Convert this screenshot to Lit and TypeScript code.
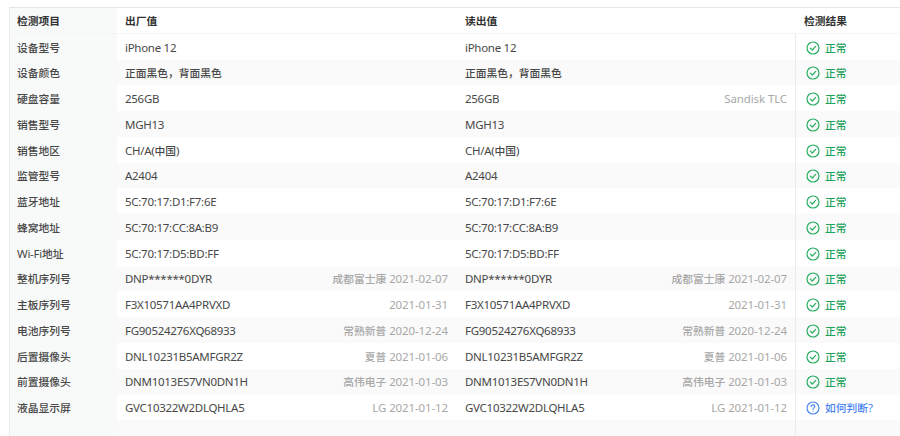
import { LitElement, html, css, svg } from "lit";
import { customElement } from "lit/decorators.js";

type Row = [string, string, string, string, string?];
const rows: Row[] = [
  ["设备型号", "iPhone 12", "", ""],
  ["设备颜色", "正面黑色，背面黑色", "", ""],
  ["硬盘容量", "256GB", "", "Sandisk TLC"],
  ["销售型号", "MGH13", "", ""],
  ["销售地区", "CH/A(中国)", "", ""],
  ["监管型号", "A2404", "", ""],
  ["蓝牙地址", "5C:70:17:D1:F7:6E", "", ""],
  ["蜂窝地址", "5C:70:17:CC:8A:B9", "", ""],
  ["Wi-Fi地址", "5C:70:17:D5:BD:FF", "", ""],
  ["整机序列号", "DNP******0DYR", "成都富士康 2021-02-07", "成都富士康 2021-02-07"],
  ["主板序列号", "F3X10571AA4PRVXD", "2021-01-31", "2021-01-31"],
  ["电池序列号", "FG90524276XQ68933", "常熟新普 2020-12-24", "常熟新普 2020-12-24"],
  ["后置摄像头", "DNL10231B5AMFGR2Z", "夏普 2021-01-06", "夏普 2021-01-06"],
  ["前置摄像头", "DNM1013ES7VN0DN1H", "高伟电子 2021-01-03", "高伟电子 2021-01-03"],
  ["液晶显示屏", "GVC10322W2DLQHLA5", "LG 2021-01-12", "LG 2021-01-12", "q"],
];

const okIcon = svg`<svg class="ic" viewBox="0 0 14 14" width="14" height="14" fill="none" stroke="#27ae60" stroke-width="1.2"><circle cx="7" cy="7" r="6"/><path d="M4.3 7.1 6.3 9l3.4-3.6" stroke-linecap="round" stroke-linejoin="round"/></svg>`;
const qIcon = svg`<svg class="ic" viewBox="0 0 14 14" width="14" height="14" fill="none" stroke="#4c84f3" stroke-width="1.2"><circle cx="7" cy="7" r="6"/><path d="M5.2 5.6c0-1 .8-1.7 1.8-1.7s1.8.7 1.8 1.6c0 1.3-1.8 1.4-1.8 2.7" stroke-linecap="round"/><path d="M7 9.7v.9"/></svg>`;

/* Latin and CJK runs have different optical sizes in the reference. */
const txt = (s: string) =>
  s
    .split(/([\u3000-\u9fff\uff00-\uffef]+)/)
    .map((p, i) => (i % 2 ? html`<span class="cjk">${p}</span>` : p));

@customElement("app-root")
export class AppRoot extends LitElement {
  static styles = css`
    :host {
      display: block;
      width: 900px;
      height: 436px;
      overflow: hidden;
      background: #fff;
      font-family: "Noto Sans", "Noto Sans CJK SC", sans-serif;
      font-size: 11.5px;
      letter-spacing: -0.28px;
      color: #484848;
    }
    .cjk {
      font-size: 10.75px;
      font-weight: 500;
      letter-spacing: 0;
    }
    .head .cjk {
      font-weight: 700;
    }
    .page {
      padding: 7px 0 0 9px;
    }
    .table {
      display: grid;
      grid-template-columns: 107px 340px 338px 105px;
      grid-auto-rows: 25.75px;
      border-top: 1px solid #e6e6e6;
      border-left: 1px solid #ececec;
    }
    .row {
      display: contents;
    }
    .c {
      display: flex;
      align-items: center;
      justify-content: space-between;
      padding: 1px 9px 0 8px;
      white-space: nowrap;
      background: #fff;
    }
    .row.alt .c {
      background: #fafafa;
    }
    .c.label {
      background: #f8f9f9;
      padding-left: 7px;
    }
    .row.alt .c.label {
      background: #f8f9f9;
    }
    .c.r {
      padding-right: 8px;
    }
    .c.res {
      gap: 5px;
      justify-content: flex-start;
      padding-left: 10px;
      border-left: 1px solid #ececec;
    }
    .head .c {
      font-weight: 700;
      color: #333;
      border-bottom: 1px solid #f5f5f5;
    }
    .head .c.res {
      padding-left: 9px;
      border-left: none;
    }
    .sub {
      color: #a8a8a8;
      letter-spacing: -0.12px;
    }
    .ok {
      color: #1fa35c;
    }
    .q {
      color: #4c84f3;
    }
    .ic {
      flex: none;
      margin-top: 1px;
    }
  `;

  render() {
    return html`<div class="page">
      <div class="table">
        <div class="row head">
          <div class="c label">${txt("检测项目")}</div>
          <div class="c">${txt("出厂值")}</div>
          <div class="c r">${txt("读出值")}</div>
          <div class="c res">${txt("检测结果")}</div>
        </div>
        ${rows.map(
          (r, i) => html`<div class="row ${i % 2 === 1 ? "alt" : ""}">
            <div class="c label"><span>${txt(r[0])}</span></div>
            <div class="c"><span>${txt(r[1])}</span><span class="sub">${txt(r[2])}</span></div>
            <div class="c r"><span>${txt(r[1])}</span><span class="sub">${txt(r[3])}</span></div>
            <div class="c res">
              ${r[4]
                ? html`${qIcon}<span class="q">${txt("如何判断")}?</span>`
                : html`${okIcon}<span class="ok">${txt("正常")}</span>`}
            </div>
          </div>`
        )}
        <div class="row alt">
          <div class="c label"></div>
          <div class="c"></div>
          <div class="c r"></div>
          <div class="c res"></div>
        </div>
      </div>
    </div>`;
  }
}
